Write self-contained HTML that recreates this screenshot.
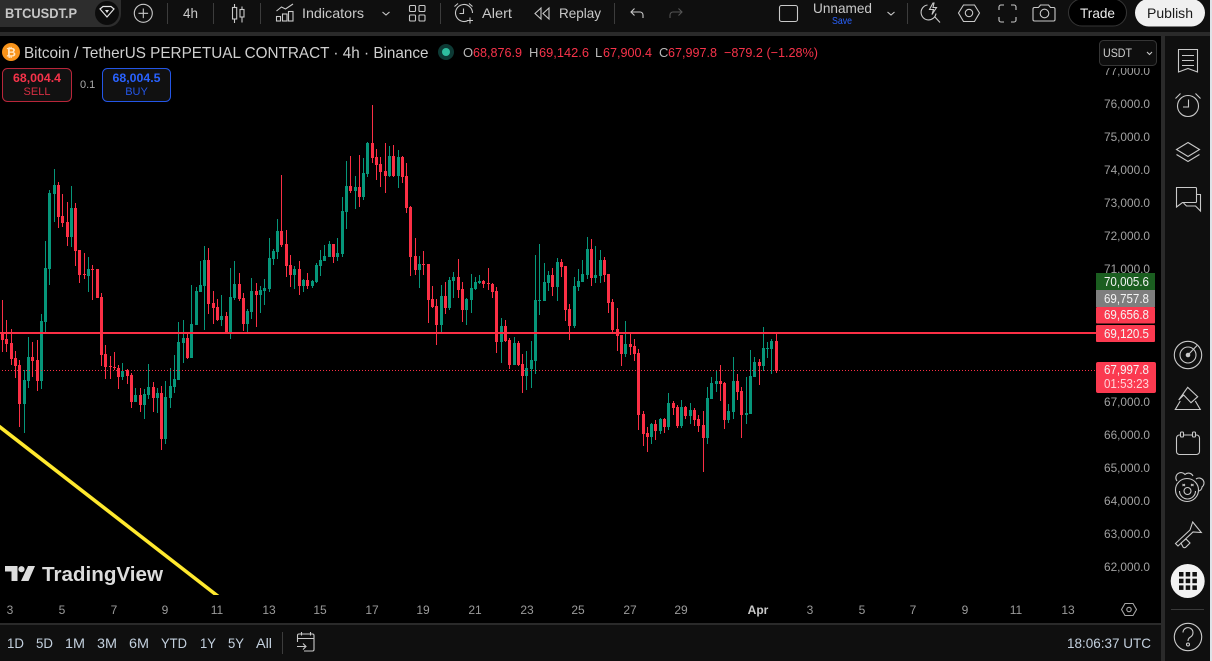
<!DOCTYPE html>
<html><head><meta charset="utf-8"><style>
html,body{margin:0;padding:0;background:#000;width:1212px;height:661px;overflow:hidden}
svg{display:block;font-family:"Liberation Sans",sans-serif}
.ic{fill:none;stroke:#c9c9c9;stroke-width:1.1}
.t{fill:#c9c9c9;font-size:14px}
.p{fill:#a2a2a2;font-size:12px}
.d{fill:#9b9b9b;font-size:12px;text-anchor:middle}
.b{fill:#c3d0de;font-size:14px}
.tag{fill:#f4f4f4;font-size:12.5px}
.r{fill:#f7334a;font-size:13px}
.k{fill:#b8b8b8;font-size:13px}
.sr{fill:none;stroke:#fb2f45;shape-rendering:crispEdges}
.sg{fill:none;stroke:#06967a;shape-rendering:crispEdges}
.w{stroke-width:3}.o{stroke-width:9}
</style></head><body>
<svg width="1212" height="661" viewBox="0 0 1212 661" xmlns="http://www.w3.org/2000/svg">
<rect width="1212" height="661" fill="#000"/>

<!-- candles A -->
<g transform="translate(0.17,150.17) scale(.33333)">
<path class="sr w" d="M7 450V606M19 510V606M34 537V645M46 603V684M58 630V831M97 576V681M112 570V723M175 96V234M187 132V231M202 156V288M226 159V348M238 300V399M253 309V387M277 345V450M292 357V444M304 429V648M316 585V687M331 618V687M343 606V660M355 645V717M382 657V702M394 669V774M421 714V786M460 696V786M484 708V900M562 549V627M625 294V492M640 423V522M652 447V513M679 486V546M718 369V453M730 429V543M769 399V531"/>
<path class="sr o" d="M7 546V570M19 567V582M34 579V627M46 624V648M58 645V762M97 621V633M112 630V693M175 105V201M187 198V219M202 216V261M226 174V303M238 300V375M253 372V375M277 356V359M292 357V444M304 441V615M316 612V651M331 648V651M343 651V654M355 654V681M382 660V678M394 675V756M421 735V765M460 711V744M484 729V867M562 564V624M625 330V462M640 459V474M652 471V510M679 498V546M718 402V447M730 444V522M769 423V435"/>
<path class="sg w" d="M73 660V849M85 561V714M124 492V717M136 273V552M148 120V405M163 57V216M214 108V291M265 321V426M367 639V690M406 714V756M433 717V807M445 642V747M472 714V789M496 693V882M511 654V774M523 615V729M535 516V690M550 510V639M574 405V624M589 411V525M601 333V426M613 288V540M664 435V528M691 354V567M703 333V450M742 477V546M754 384V507M781 408V489M793 387V465M808 264V426"/>
<path class="sg o" d="M73 690V762M85 621V693M124 513V693M136 354V516M148 129V357M163 105V132M214 174V261M265 357V378M367 663V681M406 735V756M433 732V765M445 711V735M472 729V744M496 741V867M511 708V744M523 687V711M535 576V690M550 564V579M574 522V624M589 423V525M601 405V426M613 330V408M664 498V510M691 441V552M703 402V444M742 483V522M754 423V486M781 420V435M793 414V423M808 324V417"/>
</g>
<!-- candles B -->
<g transform="translate(260.17,100.17) scale(.33333)">
<path class="sr w" d="M64 225V441M79 390V531M91 465V561M118 483V585M142 519V567M220 432V489M271 168V279M298 165V321M337 15V189M349 147V240M361 171V261M376 129V279M400 135V231M427 168V249M439 189V339M451 318V528M466 414V525M490 453V525M505 492V669M517 558V624M529 597V735M556 546V642M595 477V594M607 546V666M670 540V564M685 504V570M697 549V594M709 561V759M736 660V726M748 714V807M775 723V798"/>
<path class="sr o" d="M64 393V435M79 432V498M91 495V525M118 507V558M142 540V558M220 432V471M271 258V273M298 261V291M337 129V174M349 171V195M361 192V216M376 213V228M400 168V228M427 171V231M439 228V324M451 321V471M466 468V510M490 492V495M505 492V600M517 597V621M529 618V675M556 588V624M595 531V570M607 567V630M670 543V552M685 549V552M697 552V576M709 573V726M736 678V723M748 720V795M775 729V795"/>
<path class="sg w" d="M40 447V495M52 357V477M103 498V567M130 537V576M157 540V564M169 489V549M181 450V528M193 435V483M208 423V471M232 414V483M247 291V471M259 183V387M286 228V327M310 174V300M322 126V231M388 138V231M415 150V264M478 468V564M544 555V699M568 531V630M580 516V594M619 594V675M634 522V639M646 531V570M658 525V552M724 654V789M763 711V795"/>
<path class="sg o" d="M40 453V477M52 393V456M103 507V525M130 540V558M157 543V558M169 495V546M181 480V498M193 468V483M208 432V471M232 459V471M247 333V462M259 258V336M286 261V273M310 219V291M322 129V222M388 168V228M415 171V228M478 492V510M544 588V675M568 540V624M580 531V543M619 597V630M634 564V600M646 546V567M658 543V549M724 678V726M763 729V795"/>
</g>
<!-- candles C -->
<g transform="translate(520.17,230.17) scale(.33333)">
<path class="sr w" d="M7 372V489M97 114V198M124 87V141M136 108V273M148 222V330M214 27V168M253 81V156M265 132V249M277 207V306M292 234V363M304 315V408M331 309V375M343 327V393M355 357V600M370 543V648M382 591V666M406 570V630M433 564V609M460 513V555M472 525V594M496 528V567M523 534V588M535 555V606M550 543V726M601 405V513M613 456V597M652 432V510M664 471V624M718 387V465M769 312V429"/>
<path class="sr o" d="M7 402V438M97 135V171M124 96V111M136 108V240M148 237V288M214 57V144M253 90V135M265 132V219M277 216V300M292 297V318M304 315V372M331 342V351M343 348V372M355 369V555M370 552V612M382 609V621M406 582V603M433 567V591M460 519V534M472 531V588M496 531V558M523 540V570M535 567V588M550 585V624M601 453V462M613 459V570M652 453V486M664 483V555M718 396V408M769 333V423"/>
<path class="sg w" d="M19 363V480M34 333V474M46 75V432M58 42V255M73 99V213M85 123V183M112 84V213M163 141V294M175 117V183M187 90V156M202 21V147M226 48V159M241 60V159M316 273V381M394 579V642M421 564V612M445 489V600M484 510V594M511 519V582M562 471V642M574 441V507M589 420V486M625 522V579M640 381V567M679 441V582M691 360V552M703 381V441M730 291V423M742 336V384M754 327V432"/>
<path class="sg o" d="M19 414V438M34 390V417M46 210V393M58 210V213M73 156V213M85 135V159M112 96V171M163 168V288M175 153V171M187 132V156M202 57V135M226 135V144M241 90V138M316 342V372M394 582V621M421 567V603M445 519V591M484 531V588M511 540V558M562 504V624M574 459V507M589 453V462M625 543V570M640 453V546M679 549V555M691 438V552M703 396V441M730 354V408M742 354V357M754 333V357"/>
</g>

<!-- price lines -->
<rect x="0" y="332" width="1096" height="2" fill="#fb2f45"/>
<line x1="2" y1="370.5" x2="1096" y2="370.5" stroke="#fb2f45" stroke-width="1" stroke-dasharray="1 2"/>

<!-- yellow line -->
<path d="M-2 425.5L219 597" stroke="#ffe92e" stroke-width="3.6" fill="none"/>
<rect x="0" y="595" width="300" height="12" fill="#000"/>

<!-- TV logo -->
<g fill="#dcdcdc"><path d="M5 566h12.5v15h-6v-9.500h-6.500z"/><circle cx="21.500" cy="569.200" r="3.100"/><path d="M28 566h7l-6.500 15h-7.500z"/>
<text x="42" y="581" font-size="20" font-weight="700" textLength="121" lengthAdjust="spacingAndGlyphs">TradingView</text></g>

<!-- price scale -->
<g class="p">
<text class="p" x="1104" y="75" textLength="46" lengthAdjust="spacingAndGlyphs">77,000.0</text>
<text class="p" x="1104" y="108" textLength="46" lengthAdjust="spacingAndGlyphs">76,000.0</text>
<text class="p" x="1104" y="141" textLength="46" lengthAdjust="spacingAndGlyphs">75,000.0</text>
<text class="p" x="1104" y="174" textLength="46" lengthAdjust="spacingAndGlyphs">74,000.0</text>
<text class="p" x="1104" y="207" textLength="46" lengthAdjust="spacingAndGlyphs">73,000.0</text>
<text class="p" x="1104" y="240" textLength="46" lengthAdjust="spacingAndGlyphs">72,000.0</text>
<text class="p" x="1104" y="273" textLength="46" lengthAdjust="spacingAndGlyphs">71,000.0</text>
<text class="p" x="1104" y="406" textLength="46" lengthAdjust="spacingAndGlyphs">67,000.0</text>
<text class="p" x="1104" y="439" textLength="46" lengthAdjust="spacingAndGlyphs">66,000.0</text>
<text class="p" x="1104" y="472" textLength="46" lengthAdjust="spacingAndGlyphs">65,000.0</text>
<text class="p" x="1104" y="505" textLength="46" lengthAdjust="spacingAndGlyphs">64,000.0</text>
<text class="p" x="1104" y="538" textLength="46" lengthAdjust="spacingAndGlyphs">63,000.0</text>
<text class="p" x="1104" y="571" textLength="46" lengthAdjust="spacingAndGlyphs">62,000.0</text>
</g>
<rect x="1096" y="36" width="65" height="32" fill="#000"/>

<!-- tags -->
<rect x="1096" y="273" width="59" height="17" fill="#1b5e20"/>
<rect x="1096" y="290" width="59" height="17" fill="#7e7e7e"/>
<rect x="1096" y="307" width="59" height="16.500" rx="1" fill="#fb3a50"/>
<rect x="1096" y="325" width="59" height="17" rx="1" fill="#fb3a50"/>
<rect x="1096" y="362" width="60" height="31" rx="2" fill="#fb3a50"/>
<text class="tag" x="1104" y="286" textLength="45" lengthAdjust="spacingAndGlyphs">70,005.6</text>
<text class="tag" x="1104" y="303" textLength="45" lengthAdjust="spacingAndGlyphs">69,757.8</text>
<text class="tag" x="1104" y="319" textLength="45" lengthAdjust="spacingAndGlyphs">69,656.8</text>
<text class="tag" x="1104" y="338" textLength="45" lengthAdjust="spacingAndGlyphs">69,120.5</text>
<text class="tag" x="1104" y="374" textLength="45" lengthAdjust="spacingAndGlyphs">67,997.8</text>
<text class="tag" x="1104" y="388" textLength="45" lengthAdjust="spacingAndGlyphs" style="fill:#ffd5da">01:53:23</text>

<!-- time axis -->
<text class="d" x="10" y="614">3</text><text class="d" x="62" y="614">5</text><text class="d" x="114" y="614">7</text><text class="d" x="165" y="614">9</text><text class="d" x="217" y="614">11</text><text class="d" x="269" y="614">13</text><text class="d" x="320" y="614">15</text><text class="d" x="372" y="614">17</text><text class="d" x="423" y="614">19</text><text class="d" x="475" y="614">21</text><text class="d" x="527" y="614">23</text><text class="d" x="578" y="614">25</text><text class="d" x="630" y="614">27</text><text class="d" x="681" y="614">29</text>
<text class="d" x="758" y="614" style="fill:#c9c9c9;font-weight:700">Apr</text>
<text class="d" x="810" y="614">3</text><text class="d" x="862" y="614">5</text><text class="d" x="913" y="614">7</text><text class="d" x="965" y="614">9</text><text class="d" x="1016" y="614">11</text><text class="d" x="1068" y="614">13</text>
<path class="ic" d="M1125 603.500h8l3.500 6-3.500 6h-8l-3.500-6z" style="stroke:#a5a5a5"/><circle class="ic" cx="1129" cy="609.500" r="2.200" style="stroke:#a5a5a5"/>

<!-- frames -->
<rect x="1161" y="0" width="51" height="661" fill="#2a2a2a"/>
<rect x="1165" y="36" width="45" height="625" fill="#0f0f0f"/>
<rect x="0" y="623" width="1161" height="2" fill="#2a2a2a"/>
<rect x="0" y="625" width="1161" height="36" fill="#0f0f0f"/>
<rect x="0" y="32" width="1212" height="4" fill="#2a2a2a"/>
<rect x="0" y="0" width="1212" height="32" fill="#0f0f0f"/>
<rect x="1210" y="0" width="2" height="661" fill="#dfe3e8"/>

<!-- top bar -->
<path d="M0 0H121V14A13 13 0 0 1 108 27H0z" fill="#2d2d2d"/>
<text x="5" y="18" font-size="14" font-weight="700" fill="#c6c6c6" textLength="72" lengthAdjust="spacingAndGlyphs">BTCUSDT.P</text>
<circle cx="107" cy="13" r="12" fill="#0c0c0c"/>
<path d="M100 9l3-2.500h8l3 2.500-7 8z" fill="none" stroke="#e4e4e4" stroke-width="1.200"/><path d="M105 10h4l-2 3z" fill="#e4e4e4"/>
<circle class="ic" cx="143.300" cy="13.300" r="9"/><path class="ic" d="M143.300 8.500v9.600M138.500 13.300h9.600"/>
<path d="M167.500 3v21M213.500 3v21M260.500 3v21M440.500 3v21M614.500 3v21M907.500 3v21" stroke="#3c3c3c"/>
<text class="t" x="183" y="18" textLength="15" lengthAdjust="spacingAndGlyphs">4h</text>
<path class="ic" d="M234.500 4v3M234.500 19v4M242 6.500v3M242 17v5.500"/><rect class="ic" x="232.500" y="7.500" width="4.200" height="11.500"/><rect class="ic" x="240" y="9.500" width="4" height="7.500"/>
<path class="ic" d="M276.500 11l5-4 4 2 7.500-5"/><rect class="ic" x="276.500" y="16.500" width="4" height="4.500"/><rect class="ic" x="282.500" y="14" width="4.500" height="7"/><rect class="ic" x="288.500" y="11.500" width="4.500" height="9.500"/>
<text class="t" x="302" y="18" textLength="62" lengthAdjust="spacingAndGlyphs">Indicators</text>
<path class="ic" d="M382.500 12l3.500 3 3.500-3"/>
<rect class="ic" x="409.500" y="5.500" width="6" height="6" rx="1"/><rect class="ic" x="419" y="5.500" width="6" height="6" rx="1"/><rect class="ic" x="409.500" y="15" width="6" height="6" rx="1"/><rect class="ic" x="419" y="15" width="6" height="6" rx="1"/>
<path class="ic" d="M468 20.500A8.500 8.500 0 1 1 472.500 13M463.500 8.500v5h-4M454.500 6.500l3.500-3M469 3.500l3.500 3M470 17.500v6M467 20.500h6"/>
<text class="t" x="482" y="18" textLength="30" lengthAdjust="spacingAndGlyphs">Alert</text>
<path class="ic" d="M541 8l-6 5.500 6 5.500zM549 8l-6 5.500 6 5.500z"/>
<text class="t" x="559" y="18" textLength="42" lengthAdjust="spacingAndGlyphs">Replay</text>
<path class="ic" d="M634.500 8.500l-3.500 3.500 3.500 3.500M631 12h9a3 3 0 0 1 3 3v3" stroke-width="1.200"/>
<path class="ic" style="stroke:#555" d="M678.500 8.500l3.500 3.500-3.500 3.500M682 12h-9a3 3 0 0 0-3 3v3"/>
<rect class="ic" x="779.500" y="5.500" width="18" height="16" rx="2"/>
<text class="t" x="813" y="13" textLength="59" lengthAdjust="spacingAndGlyphs">Unnamed</text>
<text x="832" y="24" font-size="10.500" fill="#2962ff" textLength="20" lengthAdjust="spacingAndGlyphs">Save</text>
<path class="ic" d="M887.500 12l3.500 3 3.500-3"/>
<path class="ic" d="M927.500 5a7.500 7.500 0 1 0 8.500 8.500M934.500 16.500l5.500 6M933 3l-3.500 6.500h4l-1.500 5 4.500-7h-3.500l1-4.500z"/>
<path class="ic" d="M963.500 5h11l5 8-5 8.500h-11l-5-8.500z"/><circle class="ic" cx="969" cy="13" r="3.700"/>
<path class="ic" d="M999 10V7a2 2 0 0 1 2-2h3M1011 5h3a2 2 0 0 1 2 2v3M1016 17v3a2 2 0 0 1-2 2h-3M1004 22h-3a2 2 0 0 1-2-2v-3"/>
<path class="ic" d="M1034.500 7.500h4l2-2.500h8l2 2.500h3a1.500 1.500 0 0 1 1.500 1.500v10.500a1.500 1.500 0 0 1-1.500 1.500h-19a1.500 1.500 0 0 1-1.500-1.500V9a1.500 1.500 0 0 1 1.500-1.500z"/><circle class="ic" cx="1044.500" cy="13.500" r="4.300"/>
<rect x="1068.500" y="-1" width="58" height="27" rx="13.500" fill="#000" stroke="#363636"/>
<text x="1080" y="18" font-size="14" fill="#eaeaea" textLength="35" lengthAdjust="spacingAndGlyphs">Trade</text>
<rect x="1135" y="-1" width="70" height="27.500" rx="13.700" fill="#f0f0f0"/>
<text x="1147" y="18" font-size="14" fill="#1a1a1a" textLength="46" lengthAdjust="spacingAndGlyphs">Publish</text>

<!-- legend -->
<circle cx="11" cy="52" r="9" fill="#f7931a"/>
<text x="11" y="56.500" font-size="12" font-weight="700" fill="#ffe7c4" text-anchor="middle">₿</text>
<text x="24" y="58" font-size="16" fill="#cfcfcf" textLength="404.500" lengthAdjust="spacingAndGlyphs">Bitcoin / TetherUS PERPETUAL CONTRACT · 4h · Binance</text>
<circle cx="446" cy="52" r="8" fill="#0d3a35"/><circle cx="446" cy="52" r="4" fill="#2ebd9f"/>
<text class="k" x="463" y="57">O</text><text class="r" x="473" y="57" textLength="49" lengthAdjust="spacingAndGlyphs">68,876.9</text>
<text class="k" x="529" y="57">H</text><text class="r" x="539" y="57" textLength="50" lengthAdjust="spacingAndGlyphs">69,142.6</text>
<text class="k" x="595" y="57">L</text><text class="r" x="603" y="57" textLength="49" lengthAdjust="spacingAndGlyphs">67,900.4</text>
<text class="k" x="659" y="57">C</text><text class="r" x="668" y="57" textLength="49" lengthAdjust="spacingAndGlyphs">67,997.8</text>
<text class="r" x="724" y="57" textLength="94" lengthAdjust="spacingAndGlyphs">−879.2 (−1.28%)</text>

<!-- buy/sell -->
<rect x="2.500" y="68.500" width="69" height="33" rx="5" fill="#111" stroke="#b8263a"/>
<text x="37" y="82" font-size="12" font-weight="700" fill="#f7334a" text-anchor="middle" textLength="48" lengthAdjust="spacingAndGlyphs">68,004.4</text>
<text x="37" y="95" font-size="11" fill="#d62f43" text-anchor="middle">SELL</text>
<text x="80" y="88" font-size="11" fill="#aaa">0.1</text>
<rect x="102.500" y="68.500" width="68" height="33" rx="5" fill="#111" stroke="#2456e6"/>
<text x="136.500" y="82" font-size="12" font-weight="700" fill="#2962ff" text-anchor="middle" textLength="48" lengthAdjust="spacingAndGlyphs">68,004.5</text>
<text x="136.500" y="95" font-size="11" fill="#2456e6" text-anchor="middle">BUY</text>

<!-- USDT -->
<rect x="1099.500" y="40.500" width="57" height="25" rx="4" fill="#0e0e0e" stroke="#353535"/>
<text x="1103" y="57" font-size="12" fill="#cfcfcf" textLength="29" lengthAdjust="spacingAndGlyphs">USDT</text>
<path class="ic" d="M1147 52l2.500 2.500 2.500-2.500"/>

<!-- right sidebar -->
<path class="ic" d="M1178.500 49.500h19v22.500l-9.500-3.500-9.500 3.500zM1182 55.500h12M1182 60.500h12M1182 65.500h12"/>
<circle class="ic" cx="1188" cy="106" r="10.500"/><path class="ic" d="M1188.500 99.500v7.500h-5.500M1175.500 98.500l5-5M1200.500 98.500l-5-5"/>
<path class="ic" d="M1188 142.500l11.500 7-11.500 7-11.500-7zM1176.500 154.500l11.500 7 11.500-7"/>
<path class="ic" d="M1176.500 187.500h19a1 1 0 0 1 1 1v13a1 1 0 0 1-1 1h-13l-6 4.500zM1197 194.500h3.500v16.500l-5-5h-9l-3-3"/>
<circle class="ic" cx="1188" cy="355" r="13.700"/><circle class="ic" cx="1188" cy="355" r="8"/><circle cx="1188" cy="355" r="2.300" fill="#c9c9c9"/><path class="ic" d="M1188 355l9-9.500"/>
<path class="ic" d="M1178.700 400l9-12.700 10 9.400-6.700 6-7.300-7.700zM1180.300 401l-5 8.500h25l-5-8.500"/>
<rect class="ic" x="1176.500" y="435" width="23" height="19.500" rx="3"/><rect class="ic" x="1180.500" y="432" width="3" height="5" rx="1" style="fill:#0f0f0f"/><rect class="ic" x="1192.500" y="432" width="3" height="5" rx="1" style="fill:#0f0f0f"/>
<circle class="ic" cx="1187" cy="490" r="11.500"/><circle class="ic" cx="1187.500" cy="491" r="3.500"/><path class="ic" d="M1179.500 491a8 8 0 0 0 16 0M1177 481a5 5 0 0 1 8-6.500 5 5 0 0 1 8 1.500M1196 479a5 5 0 0 1 6 8 4 4 0 0 1-4 4M1182.500 484l2.500 2M1185 484l-2.500 2M1191 484l2.500 2M1193.500 484l-2.500 2"/>
<path class="ic" d="M1192.700 522l8.600 10.500-8.300-.5-15 14-2.500-2.500 14.500-13.500zM1181 543l5-4 4 4-4 4a2 2 0 0 1-3 0z"/>
<circle cx="1187.700" cy="581" r="17" fill="#f2f2f2"/>
<g fill="#111"><rect x="1179" y="572" width="4.500" height="4.500"/><rect x="1185.700" y="572" width="4.500" height="4.500"/><rect x="1192.400" y="572" width="4.500" height="4.500"/><rect x="1179" y="578.700" width="4.500" height="4.500"/><rect x="1185.700" y="578.700" width="4.500" height="4.500"/><rect x="1192.400" y="578.700" width="4.500" height="4.500"/><rect x="1179" y="585.400" width="4.500" height="4.500"/><rect x="1185.700" y="585.400" width="4.500" height="4.500"/><rect x="1192.400" y="585.400" width="4.500" height="4.500"/></g>
<rect x="1171" y="609" width="33" height="1" fill="#3a3a3a"/>
<circle class="ic" cx="1188" cy="637" r="13.700"/><path class="ic" d="M1183 632.500a5 5 0 1 1 7.500 4.500c-1.700 1-2.500 2-2.500 4"/><circle cx="1188" cy="644.500" r="1.500" class="ic"/>

<!-- bottom bar -->
<text class="b" x="7" y="648" textLength="17" lengthAdjust="spacingAndGlyphs">1D</text>
<text class="b" x="36" y="648" textLength="17" lengthAdjust="spacingAndGlyphs">5D</text>
<text class="b" x="65" y="648" textLength="20" lengthAdjust="spacingAndGlyphs">1M</text>
<text class="b" x="97" y="648" textLength="20" lengthAdjust="spacingAndGlyphs">3M</text>
<text class="b" x="129" y="648" textLength="20" lengthAdjust="spacingAndGlyphs">6M</text>
<text class="b" x="161" y="648" textLength="26" lengthAdjust="spacingAndGlyphs">YTD</text>
<text class="b" x="200" y="648" textLength="16" lengthAdjust="spacingAndGlyphs">1Y</text>
<text class="b" x="228" y="648" textLength="16" lengthAdjust="spacingAndGlyphs">5Y</text>
<text class="b" x="256" y="648" textLength="16" lengthAdjust="spacingAndGlyphs">All</text>
<path d="M282.500 632v22" stroke="#3c3c3c"/>
<path class="ic" d="M297.500 642v-6.500a1.500 1.500 0 0 1 1.500-1.500h13.500a1.500 1.500 0 0 1 1.500 1.500v14a1.500 1.500 0 0 1-1.500 1.500H304M297.500 638.500h17M301.500 632v3.500M310.500 632v3.500M297 646.500h9M303 643.500l3 3-3 3"/>
<text class="b" x="1067" y="648" textLength="84" lengthAdjust="spacingAndGlyphs">18:06:37 UTC</text>
</svg>
</body></html>
